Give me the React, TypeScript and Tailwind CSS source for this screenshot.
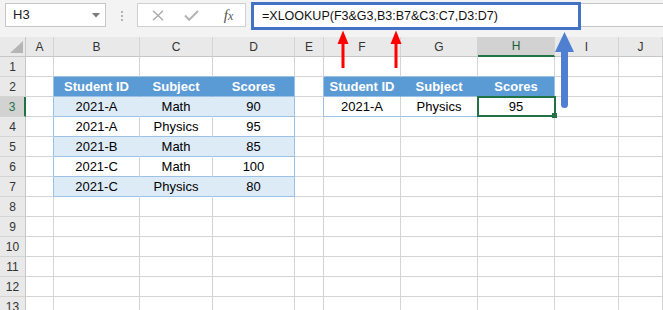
import React from "react";

const widths = [
  "w-[26px]",
  "w-[28px]",
  "w-[86px]",
  "w-[73px]",
  "w-[82px]",
  "w-[29px]",
  "w-[77px]",
  "w-[77px]",
  "w-[77px]",
  "w-[64px]",
  "flex-1",
];
const letters = ["", "A", "B", "C", "D", "E", "F", "G", "H", "I", "J"];

type Kind = "head" | "blue" | "white";
type Cell = { text: string; kind: Kind; last: boolean };

const t1: string[][] = [
  ["Student ID", "Subject", "Scores"],
  ["2021-A", "Math", "90"],
  ["2021-A", "Physics", "95"],
  ["2021-B", "Math", "85"],
  ["2021-C", "Math", "100"],
  ["2021-C", "Physics", "80"],
];
const t2: string[][] = [
  ["Student ID", "Subject", "Scores"],
  ["2021-A", "Physics", "95"],
];

function getCell(r: number, c: number): Cell | null {
  if (r >= 2 && r <= 7 && c >= 2 && c <= 4) {
    const i = r - 2;
    const kind: Kind = i === 0 ? "head" : i % 2 === 1 ? "blue" : "white";
    return { text: t1[i][c - 2], kind, last: c === 4 };
  }
  if (r >= 2 && r <= 3 && c >= 6 && c <= 8) {
    const i = r - 2;
    const kind: Kind = i === 0 ? "head" : "white";
    return { text: t2[i][c - 6], kind, last: c === 8 };
  }
  return null;
}

function cellClass(r: number, c: number, cell: Cell | null): string {
  if (cell) {
    if (cell.kind === "head") {
      return (
        "bg-[#5b9bd5] text-white font-bold border-r border-b border-b-[#9bc2e6] " +
        (cell.last ? "border-r-[#9bc2e6]" : "border-r-[#5b9bd5]")
      );
    }
    if (cell.kind === "blue") {
      return (
        "bg-[#ddebf7] text-black border-r border-b border-b-[#9bc2e6] " +
        (cell.last ? "border-r-[#9bc2e6]" : "border-r-[#ddebf7]")
      );
    }
    return (
      "bg-white text-black border-r border-b border-b-[#9bc2e6] " +
      (cell.last ? "border-r-[#9bc2e6]" : "border-r-[#d4d4d4]")
    );
  }
  const leftOfTable =
    (c === 1 && r >= 2 && r <= 7) || (c === 5 && r >= 2 && r <= 3);
  const aboveTable = r === 1 && ((c >= 2 && c <= 4) || (c >= 6 && c <= 8));
  return (
    "bg-white border-r border-b " +
    (leftOfTable ? "border-r-[#9bc2e6] " : "border-r-[#d4d4d4] ") +
    (aboveTable ? "border-b-[#9bc2e6]" : "border-b-[#d4d4d4]")
  );
}

function TopBar() {
  return (
    <div className="h-[37px] bg-[#f3f3f3] flex items-start pt-[2px] pl-[5px]">
      <div className="mt-[1px] w-[101px] h-[24px] bg-white border border-[#c6c6c6] flex items-center justify-between pl-[7px] pr-[5px]">
        <span className="text-[13px] text-[#222]">H3</span>
        <svg width="8" height="5" viewBox="0 0 8 5">
          <polygon points="0,0 8,0 4,4.5" fill="#7a7a7a" />
        </svg>
      </div>
      <div className="w-[31px] h-[28px] flex flex-col items-center justify-center gap-[2px]">
        <div className="w-[2px] h-[2px] bg-[#b4b4b4]" />
        <div className="w-[2px] h-[2px] bg-[#b4b4b4]" />
        <div className="w-[2px] h-[2px] bg-[#b4b4b4]" />
      </div>
      <div className="mt-[1px] w-[109px] h-[24px] bg-white border border-[#d0d0d0] flex items-center">
        <div className="w-[40px] flex justify-center">
          <svg width="12" height="11" viewBox="0 0 12 11">
            <path d="M1 0.8 L11 10.2 M11 0.8 L1 10.2" stroke="#a8a8a8" strokeWidth="1.3" fill="none" />
          </svg>
        </div>
        <div className="w-[26px] flex justify-center">
          <svg width="15" height="11" viewBox="0 0 15 11">
            <path d="M1 5.5 L5.2 9.8 L14 1" stroke="#b4b4b4" strokeWidth="2" fill="none" />
          </svg>
        </div>
        <div className="flex-1 flex justify-center pl-[8px]">
          <span
            className="italic text-[15px] text-[#555] leading-none"
            style={{ fontFamily: '"Liberation Serif", serif' }}
          >
            <span>f</span>
            <span className="text-[12px]">x</span>
          </span>
        </div>
      </div>
      <div className="w-[5px]" />
      <div className="w-[330px] h-[28px] bg-white border-[3px] border-[#4472c4] flex items-center pl-[8px]">
        <span className="text-[12.5px] text-[#111] whitespace-nowrap">
          =XLOOKUP(F3&amp;G3,B3:B7&amp;C3:C7,D3:D7)
        </span>
      </div>
      <div className="flex-1 mt-[1px] h-[24px] bg-white border-y border-[#c6c6c6]" />
    </div>
  );
}

function HeaderRow() {
  return (
    <div className="flex h-[20px]">
      {letters.map((l, c) => {
        if (c === 0) {
          return (
            <div
              key={c}
              className={`${widths[c]} shrink-0 h-[20px] bg-[#e9e9e9] border-r border-b border-r-[#c6c6c6] border-b-[#c6c6c6] flex items-end justify-end pr-[2px] pb-[3px]`}
            >
              <svg width="13" height="12" viewBox="0 0 13 12">
                <polygon points="0,12 13,12 13,0" fill="#b5b5b5" />
              </svg>
            </div>
          );
        }
        const sel = c === 8;
        return (
          <div
            key={c}
            className={`${widths[c]} shrink-0 h-[20px] flex items-center justify-center text-[12px] border-r border-r-[#d4d4d4] ${
              sel
                ? "bg-[#d2d2d2] border-b-2 border-b-[#217346] text-[#1f5c39]"
                : "bg-[#e9e9e9] border-b border-b-[#c6c6c6] text-[#333]"
            }`}
          >
            {l}
          </div>
        );
      })}
    </div>
  );
}

function DataRow({ r }: { r: number }) {
  return (
    <div className="flex h-[20px]">
      {widths.map((w, c) => {
        if (c === 0) {
          const sel = r === 3;
          return (
            <div
              key={c}
              className={`${w} shrink-0 h-[20px] flex items-center justify-center text-[12px] border-b border-b-[#d4d4d4] ${
                sel
                  ? "bg-[#d2d2d2] border-r-2 border-r-[#217346] text-[#217346]"
                  : "bg-[#e9e9e9] border-r border-r-[#c6c6c6] text-[#333]"
              }`}
            >
              {r}
            </div>
          );
        }
        const cell = getCell(r, c);
        const selected = r === 3 && c === 8;
        return (
          <div
            key={c}
            className={`${w} shrink-0 h-[20px] flex items-center justify-center text-[13px] ${cellClass(
              r,
              c,
              cell
            )} ${selected ? "relative" : ""}`}
          >
            {cell ? cell.text : ""}
            {selected && (
              <>
                <div className="absolute left-[-1px] top-[-1px] right-[-2px] bottom-[-1px] border-2 border-[#217346]" />
                <div className="absolute right-[-3px] bottom-[-2px] w-[5px] h-[5px] bg-[#217346]" />
              </>
            )}
          </div>
        );
      })}
    </div>
  );
}

export default function App() {
  const rows = Array.from({ length: 13 }, (_, i) => i + 1);
  return (
    <div
      className="relative w-[663px] h-[310px] overflow-hidden bg-white"
      style={{ fontFamily: '"Liberation Sans", Arial, sans-serif' }}
    >
      <TopBar />
      <HeaderRow />
      {rows.map((r) => (
        <DataRow key={r} r={r} />
      ))}
      <svg
        className="absolute left-0 top-0 pointer-events-none"
        width="663"
        height="310"
        viewBox="0 0 663 310"
      >
        <rect x="341.5" y="42" width="3" height="26" fill="#ff0000" />
        <polygon points="337.5,44 343,30.5 348.5,44" fill="#ff0000" />
        <rect x="394.5" y="42" width="3" height="26" fill="#ff0000" />
        <polygon points="390.5,44 396,30.5 401.5,44" fill="#ff0000" />
        <rect x="561" y="48" width="7" height="60" rx="3.5" fill="#4e7fd0" />
        <polygon points="555,52 564.5,32 574,52" fill="#4e7fd0" />
      </svg>
    </div>
  );
}
